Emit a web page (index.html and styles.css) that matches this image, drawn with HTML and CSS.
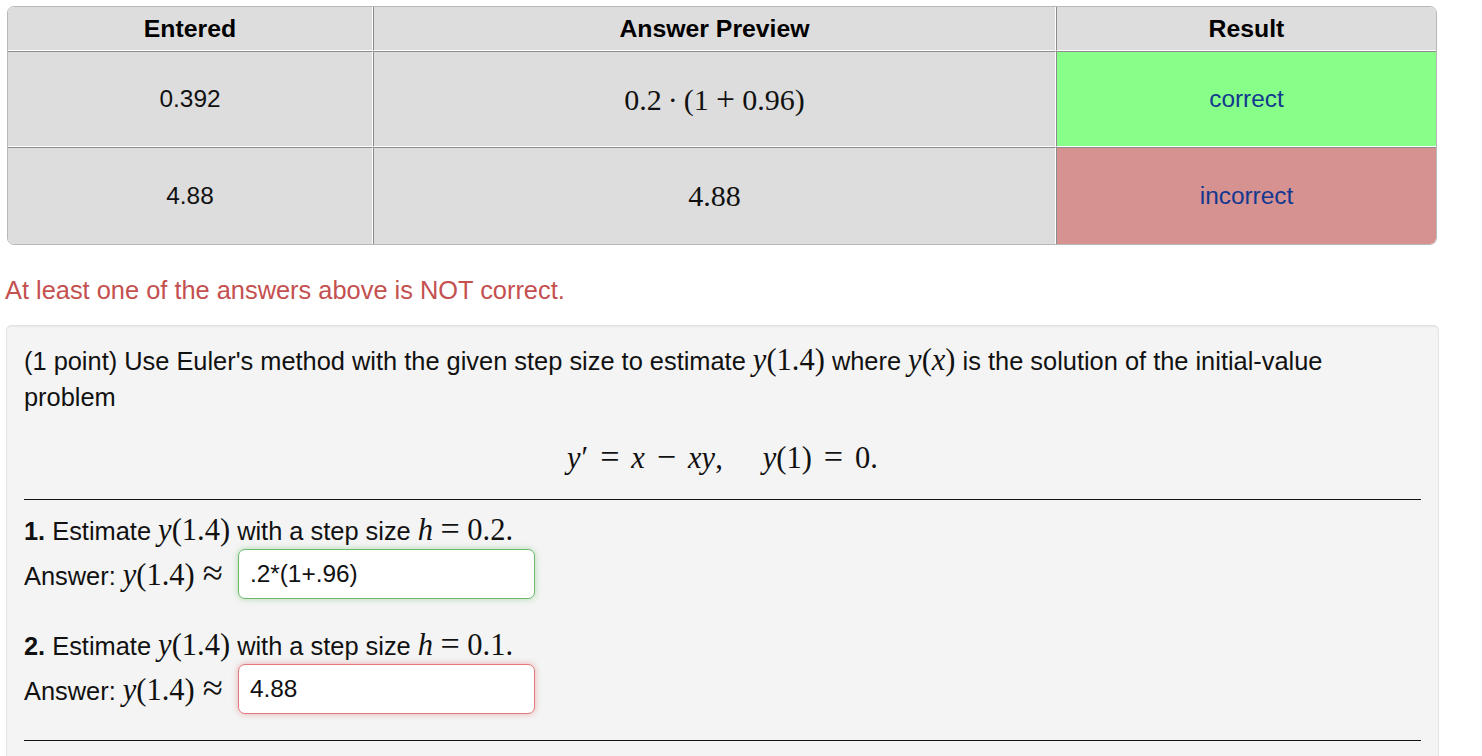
FILE: index.html
```html
<!DOCTYPE html>
<html>
<head>
<meta charset="utf-8">
<link rel="stylesheet" href="styles.css">
</head>
<body>
<div class="results-wrap">
  <table class="results">
    <thead>
      <tr>
        <th class="c1">Entered</th>
        <th class="c2">Answer Preview</th>
        <th class="c3">Result</th>
      </tr>
    </thead>
    <tbody>
      <tr>
        <td>0.392</td>
        <td class="math-cell"><span class="mn">0.2</span><span class="mo dot">·</span><span class="mn">(1</span><span class="mo">+</span><span class="mn">0.96)</span></td>
        <td class="ok">correct</td>
      </tr>
      <tr>
        <td>4.88</td>
        <td class="math-cell"><span class="mn">4.88</span></td>
        <td class="bad">incorrect</td>
      </tr>
    </tbody>
  </table>
</div>

<p class="warning">At least one of the answers above is NOT correct.</p>

<div class="problem">
  <p class="intro">(1 point) Use Euler's method with the given step size to estimate <span class="m"><span class="mi">y</span>(1.4)</span> where <span class="m"><span class="mi">y</span>(<span class="mi">x</span>)</span> is the solution of the initial-value problem</p>
  <div class="display"><span class="m"><span class="mi">y</span><span class="prime">′</span><span class="mo wide">=</span><span class="mi">x</span><span class="mo wide">−</span><span class="mi">xy</span>,<span class="qq"></span><span class="mi">y</span>(1)<span class="mo wide">=</span>0.</span></div>
  <hr class="rule">
  <div class="part">
    <div class="line"><b>1.</b> Estimate <span class="m"><span class="mi">y</span>(1.4)</span> with a step size <span class="m"><span class="mi">h</span><span class="mo">=</span>0.2.</span></div>
    <div class="answer-row">
      <span class="label">Answer: <span class="m"><span class="mi">y</span>(1.4)<span class="mo approx">≈</span></span></span>
      <input class="ans good" type="text" value=".2*(1+.96)">
    </div>
  </div>
  <div class="part second">
    <div class="line"><b>2.</b> Estimate <span class="m"><span class="mi">y</span>(1.4)</span> with a step size <span class="m"><span class="mi">h</span><span class="mo">=</span>0.1.</span></div>
    <div class="answer-row">
      <span class="label">Answer: <span class="m"><span class="mi">y</span>(1.4)<span class="mo approx">≈</span></span></span>
      <input class="ans wrong" type="text" value="4.88">
    </div>
  </div>
  <hr class="rule bottom">
</div>
</body>
</html>
```

FILE: styles.css
```css
html, body {
  margin: 0;
  padding: 0;
  background: #ffffff;
}
body {
  font-family: "Liberation Sans", Arial, Helvetica, sans-serif;
  font-size: 25.4px;
  color: #111;
}

.results-wrap {
  margin: 6px 0 0 7px;
  width: 1428px;
  border: 1px solid #b8b8b8;
  border-radius: 7px;
  overflow: hidden;
  background: #ffffff;
}
.results {
  width: 100%;
  border-collapse: separate;
  border-spacing: 0;
  table-layout: fixed;
}
.results th, .results td {
  background: #dddddd;
  text-align: center;
  border-left: 1px solid #8c8c8c;
  border-right: 1px solid #ffffff;
  padding: 0;
  box-sizing: border-box;
}
.results th:first-child, .results td:first-child {
  border-left: none;
}
.results th:last-child, .results td:last-child {
  border-right: none;
}
.results th {
  font-size: 24.8px;
  font-weight: bold;
  height: 44px;
  line-height: 28px;
  border-bottom: 1px solid #ffffff;
  color: #000;
}
.results td {
  font-size: 24.4px;
  height: 96px;
  border-top: 1px solid #8c8c8c;
  border-bottom: 1px solid #ffffff;
  color: #111;
}
.results tbody tr:last-child td {
  border-bottom: none;
  height: 97px;
}
.results .c1 { width: 365px; }
.results .c2 { width: 683px; }
.results td.ok {
  background: #88ff88;
  color: #12388f;
}
.results td.bad {
  background: #d69191;
  color: #12388f;
}
.results td.math-cell {
  font-family: "Liberation Serif", "Times New Roman", serif;
  font-size: 30px;
}

.m {
  font-family: "Liberation Serif", "Times New Roman", serif;
  font-size: 30.5px;
  line-height: 1;
}
.mi {
  font-style: italic;
}
.mo {
  margin: 0 0.22em;
  font-size: 1.12em;
  line-height: 1;
}
.mo.dot {
  font-size: 1em;
  margin: 0 0.2em;
}
.mo.wide {
  margin: 0 0.35em;
}
.prime {
  margin-left: 0.03em;
}

.warning {
  margin: 27px 0 0 5px;
  line-height: 36px;
  color: #c4504f;
}

.problem {
  margin: 17px 0 0 6px;
  width: 1397px;
  padding: 17px 17px 40px 17px;
  background: #f4f4f4;
  border: 1px solid #e3e3e3;
  border-radius: 5px;
  box-shadow: inset 0 1px 1px rgba(0, 0, 0, 0.05);
}
.intro {
  margin: 0;
  line-height: 36px;
}
.display {
  margin: 24px 0 0 0;
  height: 40px;
  line-height: 40px;
  text-align: center;
}
.qq {
  display: inline-block;
  width: 40px;
}
.rule {
  border: none;
  border-top: 1px solid #111;
  margin: 20px 0 0 0;
  height: 0;
}
.rule.bottom {
  margin-top: 25px;
}
.part {
  margin-top: 12px;
}
.part.second {
  margin-top: 27px;
}
.line {
  line-height: 36px;
  height: 36px;
}
.answer-row {
  display: flex;
  align-items: center;
  height: 52px;
}
.label {
  line-height: 36px;
}
.approx {
  font-size: 1.2em;
  margin-right: 0;
}
.ans {
  box-sizing: border-box;
  margin-left: 15px;
  width: 297px;
  height: 50px;
  padding: 0 11px;
  font-family: "Liberation Sans", Arial, Helvetica, sans-serif;
  font-size: 24.4px;
  color: #111;
  background: #fff;
  border-radius: 7px;
  outline: none;
}
.ans.good {
  border: 1px solid #6dba6d;
  box-shadow: 0 0 6px rgba(90, 180, 90, 0.45);
}
.ans.wrong {
  border: 1px solid #e07a7a;
  box-shadow: 0 0 6px rgba(220, 90, 90, 0.45);
}
```
